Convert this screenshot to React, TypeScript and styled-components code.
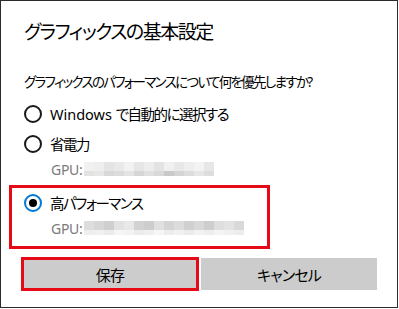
import React from 'react';
import styled, { createGlobalStyle } from 'styled-components';

const GlobalStyle = createGlobalStyle`
  html, body {
    margin: 0;
    padding: 0;
    background: #ffffff;
  }
  body {
    font-family: "Noto Sans", "Noto Sans CJK JP", sans-serif;
  }
`;

const Dialog = styled.div`
  box-sizing: border-box;
  width: 398px;
  height: 308px;
  border: 1px solid #2b2b2b;
  padding: 17px 0 0 23px;
  background: #ffffff;
  color: #000000;
  font-family: "Noto Sans", "Noto Sans CJK JP", sans-serif;
  font-feature-settings: "palt";
`;

const Title = styled.h1`
  margin: 0;
  font-size: 19px;
  line-height: 28px;
  font-weight: 400;
  letter-spacing: -1.5px;
`;

const Question = styled.p`
  margin: 26px 0 0;
  font-size: 13.5px;
  line-height: 20px;
  letter-spacing: -1.7px;
`;

const Options = styled.div`
  display: flex;
  flex-direction: column;
  margin-top: 12px;
`;

const OptionRow = styled.label<{ $top?: number }>`
  display: flex;
  align-items: center;
  gap: 8px;
  height: 20px;
  margin-top: ${p => p.$top ?? 0}px;
  font-size: 14.5px;
  line-height: 20px;
  letter-spacing: -1.5px;
  white-space: pre;
`;

const Latin = styled.span`
  letter-spacing: 0;
`;

const Radio = styled.span<{ $checked?: boolean }>`
  box-sizing: border-box;
  width: 18px;
  height: 18px;
  border-radius: 50%;
  border: 2px solid ${p => (p.$checked ? '#0078d7' : '#1a1a1a')};
  display: flex;
  align-items: center;
  justify-content: center;
  flex-shrink: 0;

  &::after {
    content: '';
    display: ${p => (p.$checked ? 'block' : 'none')};
    width: 8px;
    height: 8px;
    border-radius: 50%;
    background: #000000;
  }
`;

const GpuRow = styled.div<{ $top: number }>`
  display: flex;
  align-items: center;
  height: 18px;
  margin: ${p => p.$top}px 0 0 27px;
  font-size: 14px;
  color: #7a7a7a;
  letter-spacing: -0.3px;
`;

const Mosaic = styled.div`
  display: grid;
  grid-auto-flow: column;
  grid-template-rows: 9px 5px;
  grid-auto-columns: 10px;
  margin-left: 2px;
`;

const Cell = styled.span<{ $c: string }>`
  background: ${p => p.$c};
`;

const Highlight = styled.div`
  box-sizing: border-box;
  width: 261px;
  height: 64px;
  margin: 7px 0 0 -15px;
  padding: 5px 0 0 12px;
  border: 3px solid #e60a17;
`;

const Buttons = styled.div`
  display: flex;
  gap: 3px;
  margin: 9px 0 0 -2px;
`;

const Button = styled.button<{ $marked?: boolean }>`
  box-sizing: border-box;
  width: 176px;
  height: 32px;
  border: none;
  background: #cccccc;
  font-family: "Noto Sans CJK JP", sans-serif;
  font-feature-settings: "palt";
  font-size: 15px;
  letter-spacing: -0.8px;
  color: #000000;
  padding: 0;
  outline: ${p => (p.$marked ? '3px solid #e60a17' : 'none')};
  outline-offset: -2px;
`;

const gpuTwo = [
  ['#f1f1f1', '#e2e2e2'], ['#eeeeee', '#e6e6e6'], ['#e4e4e4', '#d8d8d8'],
  ['#e9e9e9', '#dcdcdc'], ['#f2f2f2', '#e4e4e4'], ['#e6e6e6', '#d6d6d6'],
  ['#ededed', '#e0e0e0'], ['#e3e3e3', '#d9d9d9'], ['#f0f0f0', '#c9c9c9'],
  ['#e8e8e8', '#d4d4d4'], ['#eeeeee', '#dcdcdc'], ['#f3f3f3', '#e6e6e6'],
  ['#e7e7e7', '#dddddd'],
];

const gpuThree = [
  ['#dddddd', '#eeeeee'], ['#d6d6d6', '#f0f0f0'], ['#cfcfcf', '#ebebeb'],
  ['#e2e2e2', '#f5f5f5'], ['#e8e8e8', '#f3f3f3'], ['#d2d2d2', '#ececec'],
  ['#cdcdcd', '#efefef'], ['#e0e0e0', '#f6f6f6'], ['#d4d4d4', '#ededed'],
  ['#dcdcdc', '#f1f1f1'], ['#d0d0d0', '#ebebeb'], ['#d8d8d8', '#f2f2f2'],
  ['#cecece', '#eeeeee'], ['#dedede', '#f4f4f4'], ['#e3e3e3', '#f0f0f0'],
  ['#d9d9d9', '#ededed'],
];

const Blur: React.FC<{ cols: string[][] }> = ({ cols }) => (
  <Mosaic>
    {cols.flatMap((col, i) =>
      col.map((c, j) => <Cell key={`${i}-${j}`} $c={c} />)
    )}
  </Mosaic>
);

export default function App() {
  return (
    <>
      <GlobalStyle />
      <Dialog>
        <Title>グラフィックスの基本設定</Title>
        <Question>グラフィックスのパフォーマンスについて何を優先しますか?</Question>
        <Options>
          <OptionRow>
            <Radio />
            <span><Latin>Windows </Latin>で自動的に選択する</span>
          </OptionRow>
          <OptionRow $top={10}>
            <Radio />
            省電力
          </OptionRow>
          <GpuRow $top={6}>
            GPU:
            <Blur cols={gpuTwo} />
          </GpuRow>
          <Highlight>
            <OptionRow>
              <Radio $checked />
              高パフォーマンス
            </OptionRow>
            <GpuRow $top={6}>
              GPU:
              <Blur cols={gpuThree} />
            </GpuRow>
          </Highlight>
        </Options>
        <Buttons>
          <Button $marked>保存</Button>
          <Button>キャンセル</Button>
        </Buttons>
      </Dialog>
    </>
  );
}
